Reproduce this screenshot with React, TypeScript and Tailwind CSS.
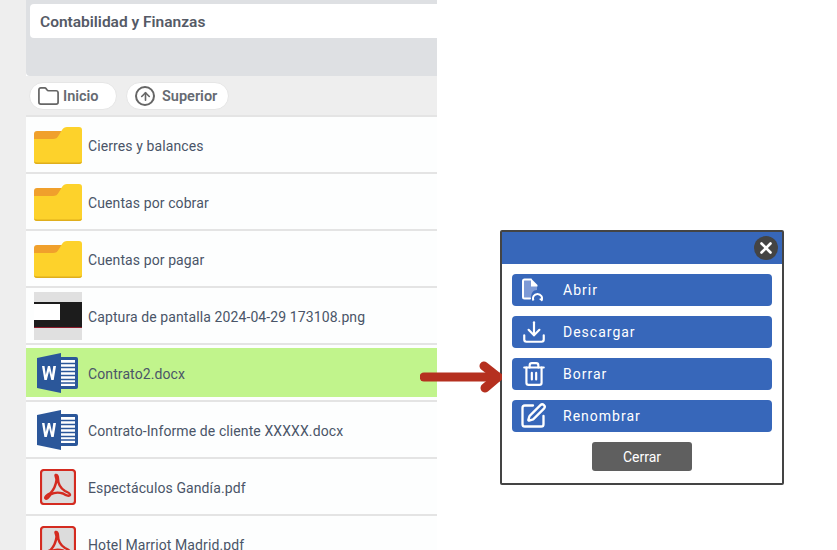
import { ArrowUp, Download, Folder, SquarePen, Trash2, X } from 'lucide-react';

const FolderIcon = () => (
  <svg className="mt-[2px]" width="48" height="37" viewBox="0 0 48 37">
    <path d="M3 4h30v10H0V7a3 3 0 0 1 3-3z" fill="#f0a02c" />
    <path d="M0 12h19c3 0 4-1 6-4l3-5c1-2 3-3 5-3h12a3 3 0 0 1 3 3v31a3 3 0 0 1-3 3H3a3 3 0 0 1-3-3z" fill="#fdd22b" />
    <path d="M0 33.500c0 1 1 2 3 2h42c2 0 3-1 3-2V34a3 3 0 0 1-3 3H3a3 3 0 0 1-3-3z" fill="#dfae1c" />
  </svg>
);

const WordIcon = () => (
  <svg className="-ml-px" width="42" height="40" viewBox="0 0 42 40">
    <path d="M16 4h23a2 2 0 0 1 2 2v28a2 2 0 0 1-2 2H16z" fill="#2b579a" />
    <path d="M19 7h19v26H19z" fill="#fff" />
    <path d="M22 10.500h16M22 14.500h16M22 18.500h16M22 22.500h16M22 26.500h16M22 30h16" stroke="#2b579a" strokeWidth="1.500" />
    <path d="M0 5 24 0v40L0 35z" fill="#2b579a" />
    <path d="m5 13 2.400 14h2.400l2.300-9 2.200 9h2.400L19 13h-2.700l-1.300 9-2-9h-2.100l-2.100 9-1.300-9z" fill="#fff" />
  </svg>
);

const PdfIcon = () => (
  <svg width="36" height="36" viewBox="0 0 36 36">
    <rect x="1" y="1" width="34" height="34" rx="3" fill="#dcdcdc" stroke="#d42b20" strokeWidth="2.200" />
    <path
      d="M15.500 6c1.500-.5 2.500 1 2.500 3.500 0 5 3 10 7 12.500 3 1.500 5.500 2.500 5 4-.5 1.300-3.500.8-7-1.500-5-1.500-9-1-12.500 1-2 3-4 5-5 4-1-1 1-4 5-5.500 3-3 5.500-9 6-13 0-2.500-1.500-4.500-1-5z"
      fill="none"
      stroke="#d42b20"
      strokeWidth="2.400"
    />
  </svg>
);

const ScreenshotThumb = () => (
  <div className="w-12 h-12 bg-[#e0e0e0] flex flex-col">
    <div className="h-[10px] shrink-0" />
    <div className="h-[26px] shrink-0 bg-[#1c1c1c] pt-[2px] flex flex-col">
      <div className="w-[26px] h-4 shrink-0 bg-white" />
      <div className="mt-[7px] h-px bg-[#8c1c2c]" />
    </div>
  </div>
);

const OpenIcon = () => (
  <svg width="22" height="24" viewBox="0 0 22 24" fill="none">
    <path d="M3 2h7v6h6v4c-4 0-6 3-6 8H3z" fill="#7d9ad6" />
    <path d="M10 1.500h1L16.500 7v1.500H10z" fill="#fff" />
    <path d="M9 20.500H3.500a1.500 1.500 0 0 1-1.500-1.500V3a1.500 1.500 0 0 1 1.500-1.500H10" stroke="#fff" strokeWidth="2" strokeLinecap="round" />
    <path d="M12.500 22.500a4.500 4.500 0 1 1 8 0" stroke="#fff" strokeWidth="2" />
    <path d="m21.800 19.500-.8 4-3-2.500z" fill="#fff" />
  </svg>
);

const files = [
  { name: 'Cierres y balances', icon: <FolderIcon /> },
  { name: 'Cuentas por cobrar', icon: <FolderIcon /> },
  { name: 'Cuentas por pagar', icon: <FolderIcon /> },
  { name: 'Captura de pantalla 2024-04-29 173108.png', icon: <ScreenshotThumb /> },
  { name: 'Contrato2.docx', icon: <WordIcon />, active: true },
  { name: 'Contrato-Informe de cliente XXXXX.docx', icon: <WordIcon /> },
  { name: 'Espectáculos Gandía.pdf', icon: <PdfIcon /> },
  { name: 'Hotel Marriot Madrid.pdf', icon: <PdfIcon /> },
];

const actions = [
  { label: 'Abrir', icon: <OpenIcon /> },
  { label: 'Descargar', icon: <Download size={26} strokeWidth={2} /> },
  { label: 'Borrar', icon: <Trash2 size={26} strokeWidth={2} /> },
  { label: 'Renombrar', icon: <SquarePen className="-ml-[2px]" size={28} strokeWidth={2} /> },
];

export default function App() {
  return (
    <div className="relative flex h-[550px] overflow-hidden bg-white font-['Roboto',sans-serif]">
      <div className="w-[26px] bg-[#eeeeee]" />

      <main className="w-[411px] shrink-0 flex flex-col">
        <div className="h-[76px] shrink-0 bg-[#dee0e3] pt-1 pl-1 rounded-bl-sm">
          <div className="h-[34px] bg-white rounded-l-sm flex items-center pl-[10px] pt-[3px] text-[15.500px] font-semibold text-[#555a66]">
            Contabilidad y Finanzas
          </div>
        </div>

        <div className="h-[40px] shrink-0 bg-[#eeeeee] flex items-center gap-[9px] pl-[3px]">
          <button className="h-[28px] w-[88px] rounded-[14px] bg-white border border-[#e6e6e6] flex items-center pl-[7px] gap-[3px] text-[14.500px] font-semibold text-[#666a72]">
            <Folder size={23} strokeWidth={1.8} color="#666" />
            <span className="pt-[2px]">Inicio</span>
          </button>
          <button className="h-[28px] w-[103px] rounded-[14px] bg-white border border-[#e6e6e6] flex items-center pl-2 gap-[7px] text-[14.500px] font-semibold text-[#666a72]">
            <span className="w-5 h-5 rounded-full border-2 border-[#666] flex items-center justify-center">
              <ArrowUp size={13} strokeWidth={3} color="#666" />
            </span>
            <span className="pt-[2px]">Superior</span>
          </button>
        </div>

        <ul className="shrink-0 border-t-2 border-[#e4e4e4] bg-[#fdfefe] -mt-px">
          {files.map((f) => (
            <li key={f.name} className="h-[57px] border-b-2 border-[#e4e4e4] py-[3px]">
              <div className={`h-[49px] flex items-center text-[14px] tracking-[0.1px] text-[#4a5568] ${f.active ? 'bg-[#c1f48c]' : ''}`}>
                <span className="w-[62px] pl-2 shrink-0">
                  <span className="w-12 h-12 flex items-center justify-center">{f.icon}</span>
                </span>
                <span className="pt-1">{f.name}</span>
              </div>
            </li>
          ))}
        </ul>
      </main>

      <div className="pl-[63px] pt-[230px]">
        <div className="w-[284px] h-[255px] border-2 border-[#444] rounded-[2px] bg-white flex flex-col">
          <div className="h-8 shrink-0 bg-[#3767ba] flex justify-end items-center pr-[4px] pb-[1px]">
            <span className="w-6 h-6 rounded-full bg-[#444] flex items-center justify-center">
              <X size={18} strokeWidth={3.5} color="#fff" />
            </span>
          </div>
          <div className="flex flex-col gap-[10px] px-[10px] pt-[10px]">
            {actions.map((a) => (
              <button key={a.label} className="h-8 rounded-[4px] bg-[#3767ba] flex items-center text-[14px] tracking-[1px] text-white">
                <span className="w-[51px] pl-[9px] flex items-center">{a.icon}</span>
                {a.label}
              </button>
            ))}
          </div>
          <button className="mt-[10px] mx-auto w-[100px] h-[29px] rounded-[3px] bg-[#5f5f5f] pt-[2px] text-[14px] text-white">
            Cerrar
          </button>
        </div>
      </div>

      {/* flecha entre la fila y el menu */}
      <svg className="absolute left-[420px] top-[360px]" width="82" height="36" viewBox="0 0 82 36" fill="none">
        <path d="M4 17h74" stroke="#b5301f" strokeWidth="9" strokeLinecap="round" />
        <path d="M64 6l14 11-13 11" stroke="#b5301f" strokeWidth="9" strokeLinecap="round" />
      </svg>
    </div>
  );
}
